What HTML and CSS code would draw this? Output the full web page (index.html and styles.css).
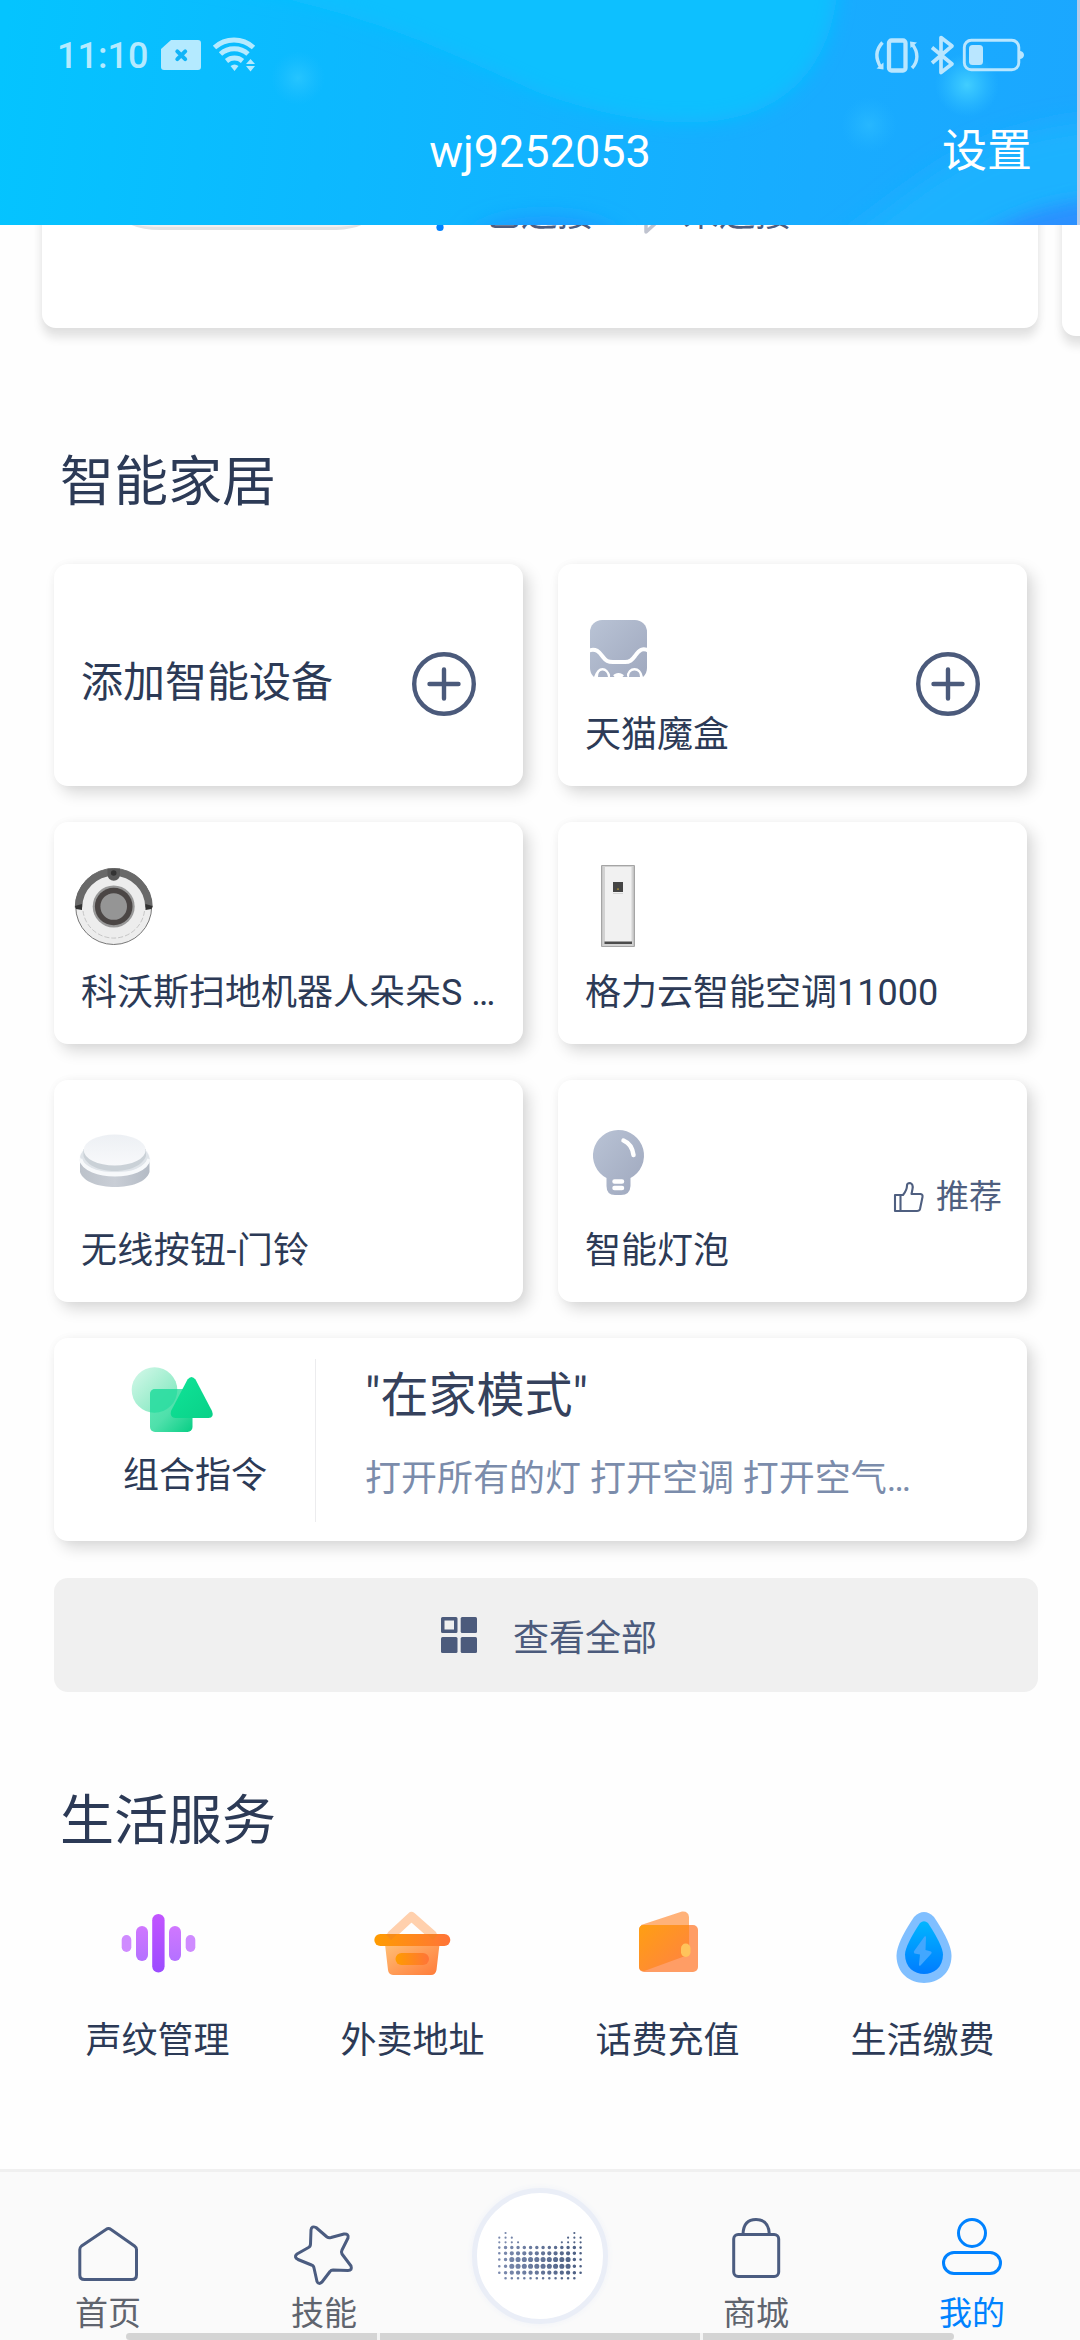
FILE: index.html
```html
<!DOCTYPE html>
<html lang="zh-CN">
<head>
<meta charset="utf-8">
<title>我的</title>
<link rel="stylesheet" href="styles.css">
</head>
<body>
<header class="header">
  <svg class="header-bg" viewBox="0 0 1080 225" preserveAspectRatio="none">
    <defs>
      <linearGradient id="sky" gradientUnits="userSpaceOnUse" x1="0" y1="60" x2="1080" y2="200">
        <stop offset="0" stop-color="#04c4ff"/><stop offset=".3" stop-color="#0cb9ff"/><stop offset=".75" stop-color="#18acff"/><stop offset="1" stop-color="#1ba7ff"/>
      </linearGradient>
      <radialGradient id="glow"><stop offset="0" stop-color="#46d2ff" stop-opacity=".9"/><stop offset=".4" stop-color="#3ccaff" stop-opacity=".6"/><stop offset="1" stop-color="#30bfff" stop-opacity="0"/></radialGradient>
      <filter id="soft" x="-20%" y="-30%" width="140%" height="160%"><feGaussianBlur stdDeviation="9"/></filter>
      <filter id="softer" x="-50%" y="-50%" width="200%" height="200%"><feGaussianBlur stdDeviation="12"/></filter>
    </defs>
    <rect width="1080" height="225" fill="url(#sky)"/>
    <path d="M120-30C360 0 440 50 540 93C600 114 650 124 700 122C790 118 838 60 838-30Z" fill="#11c0ff" filter="url(#soft)"/>
    <path d="M830 250C920 190 960 130 1110 120L1110 200L950 260Z" fill="#1ab2ff" filter="url(#softer)"/>
    <ellipse cx="545" cy="246" rx="75" ry="26" fill="#2293ff" filter="url(#softer)"/>
    <path d="M970 245C1010 215 1050 205 1100 200V260H970Z" fill="#2c90ff" filter="url(#soft)"/>
    <circle cx="298" cy="78" r="27" fill="url(#glow)" opacity=".5"/>
    <circle cx="967" cy="85" r="32" fill="url(#glow)"/>
    <circle cx="869" cy="125" r="28" fill="url(#glow)" opacity=".35"/>
    <rect x="1077" width="3" height="225" fill="#b9cbe8"/>
  </svg>
  <div class="status">
    <div class="status-side">
      <span class="clock">11:10</span>
      <svg class="sim" width="40" height="30" viewBox="161 39 40 30"><path d="M171 39H198a3 3 0 0 1 3 3V66a3 3 0 0 1-3 3H164a3 3 0 0 1-3-3V48Z" fill="#b4eaff"/><path d="M177.300 50.300L185.200 58.200M185.200 50.300L177.300 58.200" stroke="#10b4f8" stroke-width="4" stroke-linecap="round"/></svg>
      <svg class="wifi" width="44" height="34" viewBox="212 38 44 34" fill="none" stroke="#b4eaff" stroke-width="5"><path d="M214.500 47.500A29 29 0 0 1 253.500 47.500M220.500 54A20.500 20.500 0 0 1 248 54M226.500 61A12.500 12.500 0 0 1 242.500 61"/><path d="M230.500 66Q234.500 63 238.500 66L234.500 71ZM250.500 59L255 64H246ZM250.500 71.500L246 66H255Z" fill="#b4eaff" stroke="none"/></svg>
    </div>
    <svg class="status-icons" width="150" height="40" viewBox="875 34 150 40" fill="none" stroke="#b9e6ff">
      <rect x="889" y="39.500" width="16.500" height="30" rx="2.500" stroke-width="4.300"/>
      <path d="M882.500 41.500C875.500 49 875.500 58 881 66.500M912 43C918.500 51 918.500 60 912 67" stroke-width="3.400"/>
      <path d="M876.500 67.500L883.500 61.500V68.500ZM910 40.500L917 41.500L910.500 47Z" fill="#b9e6ff" stroke="none"/>
      <path d="M932 46.500L952 63L941 71.500V36.500L952 45L932 62" stroke-width="3.700" stroke-linejoin="round"/>
      <rect x="964.300" y="39.300" width="54.500" height="29.500" rx="7" stroke-width="2.900"/>
      <path d="M1020 50.500a3.200 3.200 0 0 1 0 7Z" fill="#b9e6ff" stroke-width="1"/>
      <rect x="969" y="44" width="14" height="20" rx="3.500" fill="#b9e6ff" stroke="none"/>
    </svg>
  </div>
  <div class="titlebar"><h1 class="account">wj9252053</h1><a class="settings">设置</a></div>
</header>

<main class="main">
  <div class="carousel">
    <section class="speaker">
      <svg class="speaker-pic" width="240" height="32" viewBox="126 200 240 32"><path d="M126 200V222Q138 230 160 230H336Q358 229 366 222V200Z" fill="#e2e2e4"/><path d="M126 200V221Q138 227 160 227H336Q358 226 366 221V200Z" fill="#f0f0f1"/></svg>
      <span class="link"><svg width="30" height="48" viewBox="425 188 30 48"><path d="M432 203L448 217L440 226" fill="none" stroke="#0082ff" stroke-width="4"/><circle cx="440" cy="227.500" r="3.600" fill="#0082ff"/></svg>已连接</span>
      <span class="link off"><svg width="30" height="48" viewBox="630 188 30 48"><path d="M634 224L656 203L645 193V232L656 222L634 203" fill="none" stroke="#bfc3cf" stroke-width="3.500" stroke-linejoin="round"/></svg>未连接</span>
    </section>
    <section class="speaker next"></section>
  </div>

  <h2 class="heading">智能家居</h2>
  <div class="devices">
    <article class="card add"><span class="add-label">添加智能设备</span>
      <svg class="plus" width="66" height="66" viewBox="0 0 66 66"><circle cx="33" cy="33" r="29.800"/><path d="M33 18.500V47.500M18.500 33H47.500"/></svg></article>
    <article class="card">
      <div><svg class="pic" viewBox="573 603 90 90"><defs><linearGradient id="steel" x1="0" y1="0" x2="1" y2="1"><stop offset="0" stop-color="#b9c3d5"/><stop offset="1" stop-color="#9fa8be"/></linearGradient></defs>
        <rect x="590" y="620" width="57" height="60" rx="12" fill="url(#steel)"/>
        <path d="M588 651C596 647 600 653 603 657C606 661 608 662 613 662H625C630 662 632 660 635 656C639 650 643 647 649 651" fill="none" stroke="#fff" stroke-width="4"/>
        <path d="M594 684V677Q597 668 602.500 668T611 677Q615 673 618.500 673T626 677Q628 668 634.500 668T643 677V684Z" fill="#fff"/>
        <path d="M598 677Q598 670.500 602.500 670.500T608 677ZM629 677Q629 670.500 634.500 670.500T640 677ZM610 677Q611 674 609.500 671.500Q613 674 614.500 677ZM627.500 677Q626 674 628 671.500Q624 674 622.500 677Z" fill="#a8b1c6"/></svg>
      <p class="label">天猫魔盒</p></div>
      <svg class="plus" width="66" height="66" viewBox="0 0 66 66"><circle cx="33" cy="33" r="29.800"/><path d="M33 18.500V47.500M18.500 33H47.500"/></svg></article>
    <article class="card"><div>
      <svg class="pic" viewBox="69 861 90 90"><circle cx="113.700" cy="906.500" r="38" fill="#ededed" stroke="#777" stroke-width="1"/>
        <path d="M78.500 907.500A35.200 35.200 0 0 1 149 907.500" fill="none" stroke="#696969" stroke-width="7.500"/>
        <path d="M75 906L82 904V910L76 909ZM152.500 906L145.500 904V910L151.500 909Z" fill="#333"/>
        <path d="M83 911A31 31 0 0 0 144.500 911" fill="none" stroke="#c6c6c6" stroke-width="1" stroke-dasharray="5 2"/>
        <path d="M107.500 868.500H120V874.500a6.200 6.200 0 0 1-12.500 0Z" fill="#595959"/><circle cx="113.700" cy="873" r="2.800" fill="#333"/>
        <circle cx="113.700" cy="906.500" r="21" fill="#999"/><circle cx="113.700" cy="906.500" r="18.800" fill="#4b4645"/><circle cx="113.700" cy="906.500" r="13.300" fill="#959595"/></svg>
      <p class="label">科沃斯扫地机器人朵朵S …</p></div></article>
    <article class="card"><div>
      <svg class="pic" viewBox="573 861 90 90"><rect x="601" y="865" width="34" height="82" rx="1" fill="#a5a5a5"/><rect x="602.200" y="866" width="31.500" height="80" fill="#d2d2d2"/><rect x="605" y="867" width="26.500" height="75" fill="#f1f1f1"/><rect x="613" y="882" width="10" height="10" fill="#454545"/><rect x="617.200" y="888.500" width="1.600" height="1.200" fill="#c8a62d"/><path d="M613 893.500H623" stroke="#d5d5d5"/><rect x="604.500" y="941.500" width="27.500" height="2.500" fill="#4c4c4c"/></svg>
      <p class="label">格力云智能空调11000</p></div></article>
    <article class="card"><div>
      <svg class="pic" viewBox="69 1119 90 90"><defs><linearGradient id="rim"><stop offset="0" stop-color="#bcc2ca"/><stop offset=".5" stop-color="#c9ced6"/><stop offset="1" stop-color="#b4bbc5"/></linearGradient><linearGradient id="cap" x1="0" y1="0" x2="0" y2="1"><stop offset="0" stop-color="#edf0f4"/><stop offset="1" stop-color="#f8f9fb"/></linearGradient></defs>
        <path d="M80 1158V1172C86 1192 144 1192 149.500 1172V1158Z" fill="url(#rim)"/><ellipse cx="114.700" cy="1158" rx="35" ry="17.500" fill="#f5f7fa"/>
        <path d="M80 1157Q82 1150 88 1147H141Q148 1151 149.500 1158C141 1168 135 1172 114.700 1172S85 1166 80 1157Z" fill="#dfe4e9"/><path d="M80.500 1159C86 1180 144 1180 149 1159" fill="none" stroke="#f7f9fb" stroke-width="3.500"/>
        <path d="M83.500 1149V1156C90 1176 139 1176 146 1156V1149Z" fill="#cad1d7"/><ellipse cx="114.700" cy="1150" rx="31" ry="15.500" fill="url(#cap)"/></svg>
      <p class="label spaced">无线按钮-门铃</p></div></article>
    <article class="card"><div>
      <svg class="pic" viewBox="573 1119 90 90"><path d="M618 1130a25.500 25.500 0 0 1 12.500 48V1186Q630 1195 621 1195H615Q606.500 1195 606.500 1186V1178A25.500 25.500 0 0 1 618 1130Z" fill="url(#steel)"/><path d="M623.500 1140.500Q632 1144 633.500 1155" fill="none" stroke="#fff" stroke-width="4.500" stroke-linecap="round"/><path d="M614.500 1181.500H622M614.500 1188H622" stroke="#fff" stroke-width="4.500" stroke-linecap="round"/></svg>
      <p class="label">智能灯泡</p></div>
      <span class="tip"><svg width="32" height="32" viewBox="893 1181 32 32"><path d="M895 1195H903Q907 1190 907 1185.500Q907 1183 910 1183Q913.500 1184 912.500 1189L911.500 1194H920.500Q923 1194.500 922.500 1197L920 1209Q919.500 1211 917 1211H895ZM900.500 1195V1211" fill="none" stroke="#4f5f80" stroke-width="2.100" stroke-linejoin="round"/></svg>推荐</span></article>
  </div>

  <article class="scene">
    <div class="scene-kind">
      <svg width="90" height="72" viewBox="128 1363 90 72"><defs><linearGradient id="mint" x1="0" y1="0" x2="1" y2="1"><stop offset="0" stop-color="#d6f8ea"/><stop offset="1" stop-color="#75e6b9"/></linearGradient><linearGradient id="leaf" x1="0" y1="0" x2="1" y2="1"><stop offset="0" stop-color="#62eab8"/><stop offset=".5" stop-color="#4fe0ab"/><stop offset="1" stop-color="#06ce84"/></linearGradient><linearGradient id="pine" x1="0" y1="0" x2="1" y2="1"><stop offset="0" stop-color="#10e498"/><stop offset="1" stop-color="#09d188"/></linearGradient><clipPath id="lens"><circle cx="154.500" cy="1390" r="22.800"/></clipPath></defs>
        <circle cx="154.500" cy="1390" r="22.800" fill="url(#mint)"/><rect x="150" y="1389" width="42.500" height="43" rx="5" fill="url(#leaf)"/><rect x="150" y="1389" width="42.500" height="43" rx="5" fill="#2bdca0" opacity=".8" clip-path="url(#lens)"/>
        <path d="M187.500 1379.500Q191.500 1374.500 195.500 1379.500L212 1411Q214.500 1417.500 208.500 1418H175.500Q169.500 1417.500 171 1411Z" fill="url(#pine)"/></svg>
      <p class="label">组合指令</p>
    </div>
    <div class="scene-info"><h3 class="scene-name">"在家模式"</h3><p class="scene-desc">打开所有的灯 打开空调 打开空气…</p></div>
  </article>

  <a class="all"><svg width="36" height="36" viewBox="0 0 36 36" fill="#4c5b7c"><path fill-rule="evenodd" d="M1.500 0H15q1.500 0 1.500 1.500V14.500q0 1.500-1.500 1.500H1.500Q0 16 0 14.500V1.500Q0 0 1.500 0ZM3.500 3.500V12.500H13V3.500Z"/><rect x="19.700" width="16.300" height="16" rx="1.500"/><rect y="20" width="16.500" height="16" rx="1.500"/><rect x="19.700" y="20" width="16.300" height="16" rx="1.500"/></svg>查看全部</a>

  <h2 class="heading services-heading">生活服务</h2>
  <div class="services">
    <div class="service"><svg class="pic" viewBox="112 1899 90 90"><defs><linearGradient id="violet" x1="0" y1="0" x2="0" y2="1"><stop offset="0" stop-color="#c255ff"/><stop offset="1" stop-color="#9b4cff"/></linearGradient><linearGradient id="lilac" x1="0" y1="0" x2="0" y2="1"><stop offset="0" stop-color="#d077ff"/><stop offset="1" stop-color="#b471ff"/></linearGradient></defs>
      <rect x="120.700" y="1935" width="9.600" height="17" rx="4.800" fill="#cf8bff"/><rect x="135" y="1926" width="12" height="35" rx="6" fill="url(#lilac)"/><rect x="151.200" y="1914" width="12.400" height="58.500" rx="6.200" fill="url(#violet)"/><rect x="168" y="1926" width="12" height="35" rx="6" fill="url(#lilac)"/><rect x="184.700" y="1935" width="9.600" height="17" rx="4.800" fill="#cf8bff"/></svg><p class="label">声纹管理</p></div>
    <div class="service"><svg class="pic" viewBox="367 1899 90 90"><defs><linearGradient id="orange"><stop offset="0" stop-color="#ff9c00"/><stop offset="1" stop-color="#ff7438"/></linearGradient><linearGradient id="peach" x1="0" y1="0" x2="1" y2="1"><stop offset="0" stop-color="#ffc47a"/><stop offset="1" stop-color="#ff7a38"/></linearGradient></defs>
      <path d="M390.500 1935L410.500 1916.500L431.500 1935" fill="none" stroke="#ffd0ad" stroke-width="9" stroke-linecap="round" stroke-linejoin="round"/><path d="M383.500 1940H439L435.500 1970Q434.500 1975 430 1975H392Q387.500 1974.500 387 1970Z" fill="url(#peach)"/><rect x="373.300" y="1934" width="76" height="12" rx="6" fill="url(#orange)"/><path d="M385 1934H396L390 1940ZM426 1934H437L432 1940Z" fill="#ef8424" opacity=".5"/><rect x="394.500" y="1953" width="33.500" height="12" rx="6" fill="url(#orange)"/></svg><p class="label">外卖地址</p></div>
    <div class="service"><svg class="pic" viewBox="622 1899 90 90"><defs><linearGradient id="wal" x1="0" y1="0" x2="1" y2="1"><stop offset="0" stop-color="#ff9f12"/><stop offset="1" stop-color="#ff8144"/></linearGradient></defs>
      <path d="M640 1925L681 1911.500Q687.500 1911 688 1917V1950Q687 1954 683 1956L645 1970Z" fill="#ffb279"/><rect x="638" y="1925" width="59" height="47" rx="5" fill="#ff9d65"/><path d="M643 1925H688V1951Q687 1955 683 1956.500L646 1970Q638 1973 638 1966V1930Q638 1925 643 1925Z" fill="url(#wal)"/><rect x="680" y="1943.500" width="9.500" height="13.500" rx="4.700" fill="#ffc35b"/></svg><p class="label">话费充值</p></div>
    <div class="service"><svg class="pic" viewBox="878 1899 90 90"><defs><linearGradient id="drop" x1="0" y1="0" x2="0" y2="1"><stop offset="0" stop-color="#00b6ff"/><stop offset="1" stop-color="#007cff"/></linearGradient></defs>
      <path d="M914 1917Q924 1907 934 1917Q951.500 1943 951.500 1955.500C951.500 1992 896.500 1992 896.500 1955.500Q896.500 1943 914 1917Z" fill="#80bfff"/><path d="M920 1923Q924 1919.500 928 1923Q943 1946 943 1954.500C943 1980.500 905 1980.500 905 1954.500Q905 1946 920 1923Z" fill="url(#drop)"/><path d="M924.500 1936.500Q926 1935.500 926 1937.500L925.500 1950L931 1951.500Q932.500 1952.500 931 1954L920.500 1965.500Q918.500 1966.500 919 1964L920 1954.500L914.500 1953.500Q913 1952 914.500 1950.500Z" fill="#42a7ff"/></svg><p class="label">生活缴费</p></div>
  </div>
</main>

<nav class="tabs">
  <a class="tab"><svg width="66" height="66" viewBox="75 2219 66 66"><path d="M106 2229.500Q108.500 2227.500 111 2229.500L134.500 2246Q136.500 2247.500 136.500 2249.500V2275Q136.500 2279.500 132 2279.500H84.500Q79.800 2279.500 79.800 2275V2249.500Q79.800 2247.500 81.500 2246Z"/></svg>首页</a>
  <a class="tab"><svg width="66" height="66" viewBox="291 2219 66 66"><path d="M311 2230Q311.500 2225.500 316 2227.500L327 2237Q328.500 2238 331 2237.500L344 2234Q349 2233.500 348 2238L342 2250Q341 2252 342 2254L351 2266Q352.500 2270.500 348 2270.500L333 2270Q331 2270 330 2271.500L322 2282Q318.500 2285 317 2281.500L314 2268Q313.500 2265.500 311.500 2265L298 2259.500Q293.500 2257 297 2254L308.500 2247.500Q310.500 2246.500 310.500 2244Z"/></svg>技能</a>
  <a class="genie"><svg width="90" height="52" viewBox="495 2230 90 52" fill="none" stroke-linecap="round"><defs><linearGradient id="ink" gradientUnits="userSpaceOnUse" x1="499" y1="0" x2="581" y2="0"><stop offset="0" stop-color="#7c8baf"/><stop offset="1" stop-color="#4b5e82"/></linearGradient></defs>
    <g stroke="url(#ink)" stroke-dasharray="0 6.254">
      <path stroke-width="2.200" d="M505.550 2233h.1M574.350 2233h.1M499.300 2237.700h12.600M568.100 2237.700h12.600M499.300 2242.300h18.900M561.850 2242.300h18.900"/>
      <path stroke-width="2.600" d="M499.300 2247.600h.1M499.300 2253.300h.1M499.300 2259.500h.1M499.300 2266.300h.1M499.300 2272.700h.1M580.600 2247.600h.1M580.600 2253.300h.1M580.600 2259.500h.1M580.600 2266.300h.1M580.600 2272.700h.1M505.550 2278.300h68.900"/>
      <path stroke-width="3.500" d="M505.550 2247.600h68.900M505.550 2253.300h.1M505.550 2259.500h.1M505.550 2266.300h.1M505.550 2272.700h.1M574.350 2253.300h.1M574.350 2259.500h.1M574.350 2266.300h.1M574.350 2272.700h.1"/>
      <path stroke-width="4.300" d="M511.800 2253.300h56.400M511.800 2272.700h56.400"/>
      <path stroke-width="5.100" d="M511.800 2259.500h56.400M511.800 2266.300h56.400"/>
    </g></svg></a>
  <a class="tab"><svg width="66" height="66" viewBox="723 2219 66 66"><rect x="733.700" y="2234.500" width="45" height="42" rx="4.500"/><path d="M743 2234Q743.500 2219.500 756 2219.500T769.300 2234"/></svg>商城</a>
  <a class="tab current"><svg width="66" height="66" viewBox="939 2219 66 66"><circle cx="972" cy="2233" r="13.500"/><rect x="943.500" y="2252.500" width="57" height="21" rx="10.500"/></svg>我的</a>
</nav>
<div class="gesture"><i></i><i></i><i></i></div>
</body>
</html>
```
FILE: styles.css
```css
* { box-sizing: border-box; }
body {
  margin: 0; width: 1080px; height: 2340px; overflow: hidden; position: relative;
  display: flex; flex-direction: column; background: #fefefe; color: #2c3a56;
  font-family: Roboto, "Noto Sans CJK SC", sans-serif; font-size: 36px;
}
h1, h2, h3, p { margin: 0; font-weight: 400; }
svg { flex: none; display: block; overflow: visible; }

.header { position: relative; height: 225px; flex: none; z-index: 2; overflow: hidden; color: #fff; }
.header-bg { position: absolute; inset: 0; width: 1080px; height: 225px; z-index: -1; }
.status { display: flex; justify-content: space-between; align-items: center; height: 109px; padding: 0 55px 0 57px; }
.status-side { display: flex; align-items: center; }
.clock { width: 104px; line-height: 40px; font-size: 36px; font-weight: 500; color: #b4eaff; margin-top: 3px; }
.wifi { margin-left: 11px; }
.titlebar { display: grid; grid-template-columns: 1fr auto 1fr; align-items: center; height: 86px; padding: 0 48px; font-size: 45px; line-height: 60px; }
.account { grid-column: 2; font-size: 45px; }
.settings { justify-self: end; }

.main { flex: 1; }
.carousel { display: flex; gap: 24px; height: 145px; overflow: hidden; padding-left: 42px; }
.speaker {
  flex: none; display: flex; width: 996px; height: 163px; margin-top: -60px; padding: 23px 0 0 84px;
  border-radius: 14px; background: #fff; color: #4f5c7d;
  box-shadow: 0 10px 10px rgba(0, 0, 0, .1), 0 0 10px rgba(0, 0, 0, .05);
}
.speaker.next { height: 171px; }
.speaker-pic { margin-top: 12px; }
.link { display: flex; gap: 30px; height: 48px; margin-left: 59px; font-size: 36px; line-height: 53px; }
.link.off { margin-left: 38px; gap: 22px; }

.heading { margin: 83px 0 0 60px; font-size: 54px; line-height: 60px; }
.devices { display: grid; grid-template-columns: 469px 469px; grid-auto-rows: 222px; gap: 36px 35px; margin: 51px 0 0 54px; }
.card, .scene {
  border-radius: 14px; background: #fff;
  box-shadow: 6px 7px 15px rgba(0, 0, 0, .15), 0 0 8px rgba(0, 0, 0, .03);
}
.card { display: flex; justify-content: space-between; }
.add { align-items: center; }
.add-label { margin: 16px 0 0 27px; font-size: 42px; line-height: 54px; }
.plus { align-self: center; margin: 18px 46px 0 0; fill: none; stroke: #4b5a7b; stroke-width: 4.400; stroke-linecap: round; }
.pic { width: 90px; height: 90px; margin: 39px 0 0 15px; }
.label { line-height: 50px; }
.card .label { margin: 17px 0 0 27px; white-space: nowrap; }
.label.spaced { letter-spacing: .35px; }
.tip { display: flex; align-items: center; align-self: flex-start; gap: 11px; margin: 92px 25px 0 0; font-size: 33px; line-height: 50px; color: #4f5f80; }

.scene { display: flex; width: 973px; height: 203px; margin: 36px 0 0 54px; padding: 21px 0 19px; }
.scene-kind { width: 262px; padding-left: 69px; border-right: 1px solid #ececee; }
.scene-kind svg { margin: 4px 0 0 5px; }
.scene-kind .label { margin-top: 16px; }
.scene-info { padding-left: 49px; }
.scene-name { margin-top: 7px; font-size: 48px; line-height: 60px; color: #35415c; }
.scene-desc { margin-top: 28px; line-height: 50px; color: #7b8cab; }

.all { display: flex; align-items: center; justify-content: center; gap: 36px; width: 984px; height: 114px; margin: 37px 0 0 54px; padding-left: 6px; border-radius: 14px; background: #f0f0f0; color: #4c5b7c; }
.services-heading { margin-top: 100px; }
.services { display: grid; grid-template-columns: repeat(4, 255px); margin: 47px 30px 0; }
.service { display: flex; flex-direction: column; align-items: center; }
.service .pic { margin: 0; }
.service .label { margin-top: 27px; }

.tabs { display: flex; flex: none; height: 171px; border-top: 3px solid #f0f0f0; background: #fafafa; color: #5f646e; }
.tab, .genie { width: 216px; display: flex; flex-direction: column; align-items: center; }
.tab { padding-top: 47px; gap: 7px; font-size: 33px; line-height: 44px; }
.tab svg { fill: none; stroke: #4b5c80; stroke-width: 3; stroke-linejoin: round; }
.tab.current { color: #0082ff; }
.tab.current svg { stroke: #0082ff; }
.genie { width: 136px; height: 136px; margin: 16px 40px 0; justify-content: center; border: 5px solid #eaeef7; border-radius: 50%; background: #fff; box-shadow: 0 0 6px #eef1f8; }
.gesture { position: absolute; left: 126px; bottom: 0; display: grid; grid-template-columns: 251px 320px 251px; gap: 3px; width: 828px; height: 7px; border-radius: 4px; overflow: hidden; background: #f4f4f4; }
.gesture i { background: #d4d4d4; }
```
